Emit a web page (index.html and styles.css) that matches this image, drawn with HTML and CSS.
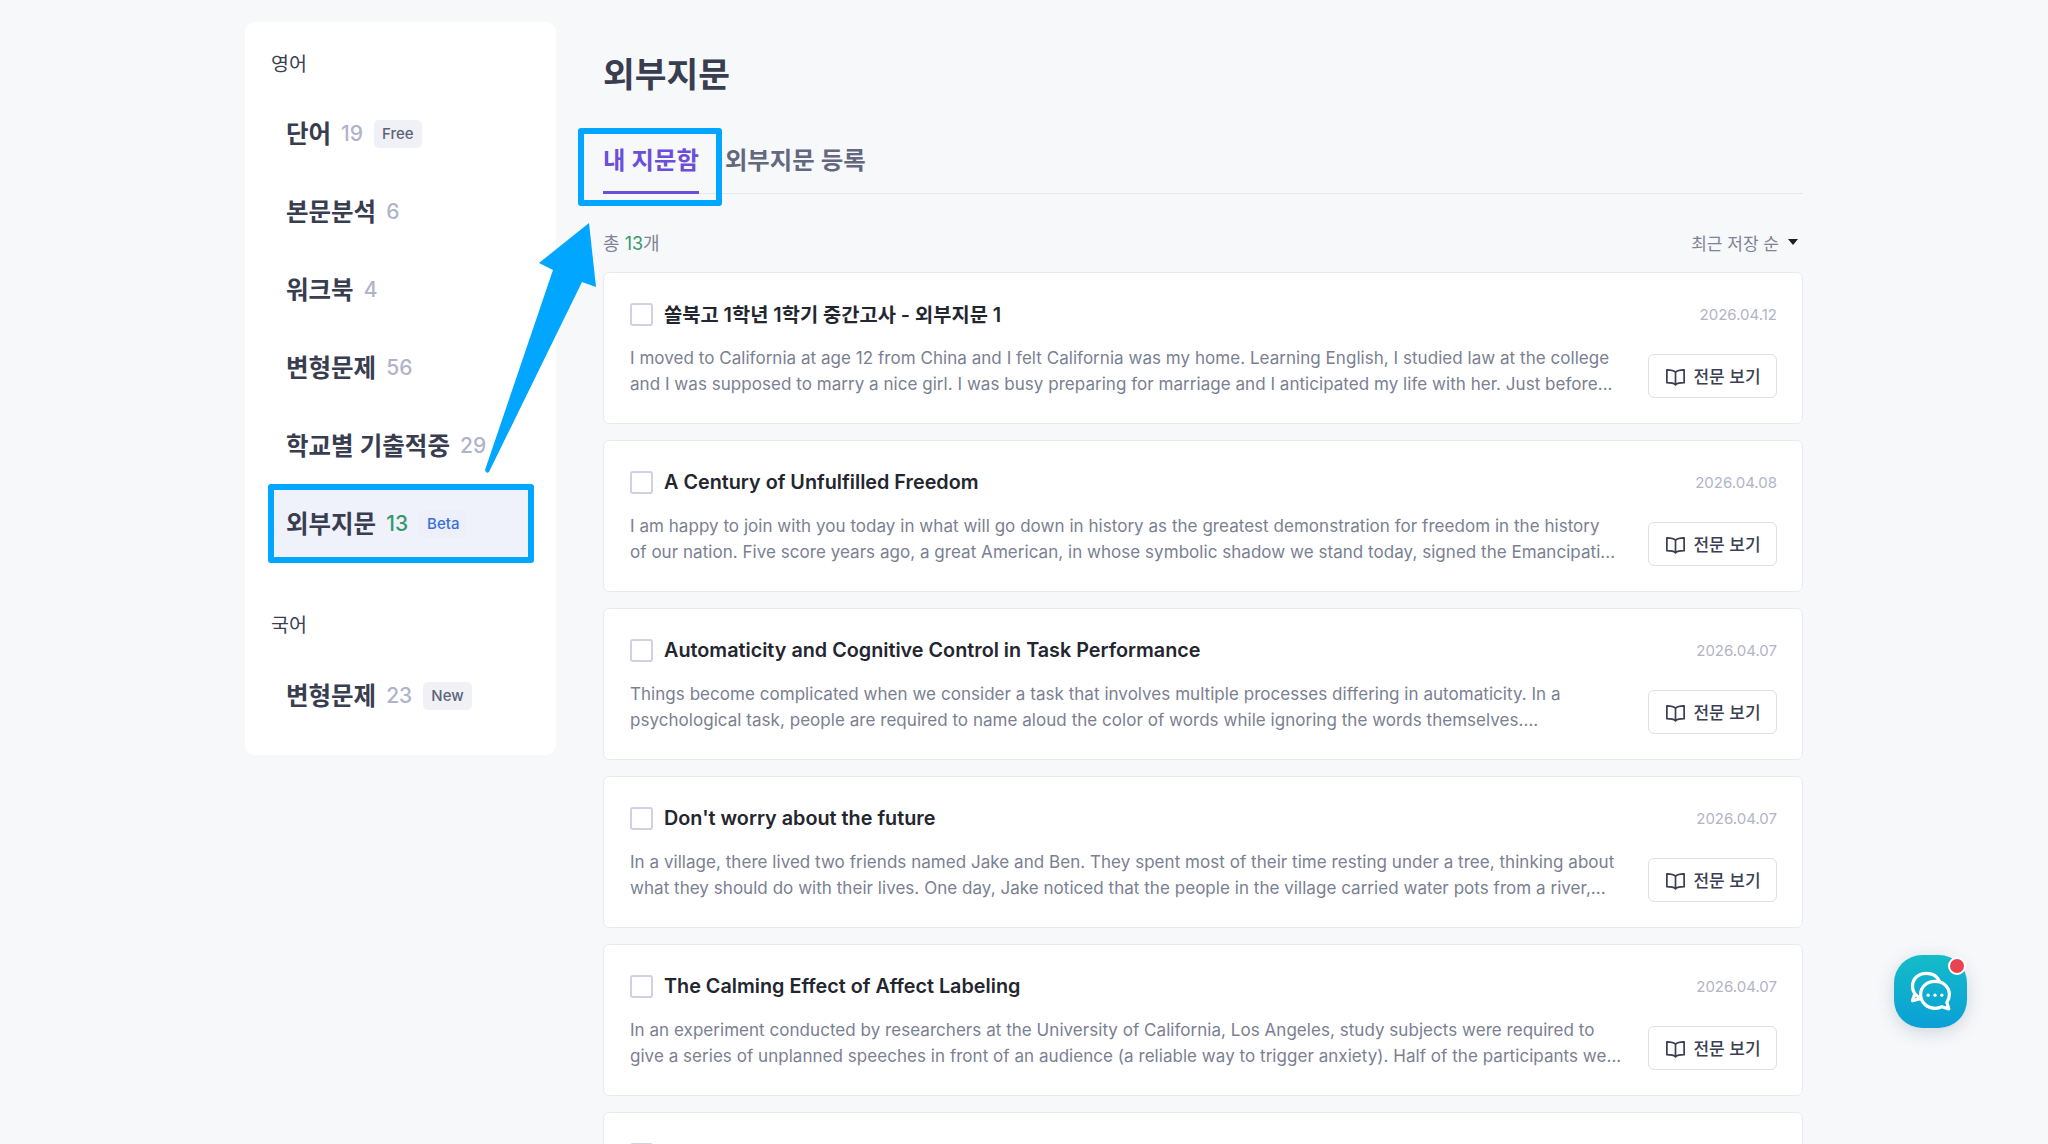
FILE: index.html
```html
<!DOCTYPE html>
<html lang="ko">
<head>
  <meta charset="UTF-8" />
  <title>외부지문</title>
  <link rel="stylesheet" href="styles.css">
</head>
<body>

  <div class="page">
    <!-- Sidebar -->
    <nav class="sidebar">
      <div class="group-label">영어</div>
      <a class="side-item"><span class="side-name">단어</span><span class="side-count">19</span><span class="tag">Free</span></a>
      <a class="side-item"><span class="side-name">본문분석</span><span class="side-count">6</span></a>
      <a class="side-item"><span class="side-name">워크북</span><span class="side-count">4</span></a>
      <a class="side-item"><span class="side-name">변형문제</span><span class="side-count">56</span></a>
      <a class="side-item"><span class="side-name">학교별 기출적중</span><span class="side-count">29</span></a>
      <a class="side-item active"><span class="side-name">외부지문</span><span class="side-count">13</span><span class="tag">Beta</span></a>
      <div class="group-label second">국어</div>
      <a class="side-item"><span class="side-name">변형문제</span><span class="side-count">23</span><span class="tag">New</span></a>
    </nav>

    <!-- Main -->
    <main class="content">
      <h1 class="page-title">외부지문</h1>

      <div class="tabs">
        <a class="tab active">내 지문함</a>
        <a class="tab">외부지문 등록</a>
      </div>

      <div class="list-head">
        <div class="total">총 <span class="total-num">13</span>개</div>
        <div class="sort">최근 저장 순 <span class="caret"></span></div>
      </div>

      <section class="cards">
        <article class="card">
          <div class="card-top">
            <span class="checkbox"></span>
            <h3>쏠북고 1학년 1학기 중간고사 - 외부지문 1</h3>
            <span class="date">2026.04.12</span>
          </div>
          <div class="card-body">
            <p>I moved to California at age 12 from China and I felt California was my home. Learning English, I studied law at the college<br>and I was supposed to marry a nice girl. I was busy preparing for marriage and I anticipated my life with her. Just before...</p>
            <button class="view-btn"><svg viewBox="0 0 24 24"><path d="M12 7.5C10.5 5.8 8 5 3 5v13.500c5 0 7.500.7 9 2.200 1.500-1.500 4-2.200 9-2.200V5c-5 0-7.500.8-9 2.500zM12 7.500v13.200"/></svg><span class="btn-label">전문 보기</span></button>
          </div>
        </article>

        <article class="card">
          <div class="card-top">
            <span class="checkbox"></span>
            <h3>A Century of Unfulfilled Freedom</h3>
            <span class="date">2026.04.08</span>
          </div>
          <div class="card-body">
            <p>I am happy to join with you today in what will go down in history as the greatest demonstration for freedom in the history<br>of our nation. Five score years ago, a great American, in whose symbolic shadow we stand today, signed the Emancipati...</p>
            <button class="view-btn"><svg viewBox="0 0 24 24"><path d="M12 7.5C10.5 5.8 8 5 3 5v13.500c5 0 7.500.7 9 2.200 1.500-1.500 4-2.200 9-2.200V5c-5 0-7.500.8-9 2.500zM12 7.500v13.200"/></svg><span class="btn-label">전문 보기</span></button>
          </div>
        </article>

        <article class="card">
          <div class="card-top">
            <span class="checkbox"></span>
            <h3>Automaticity and Cognitive Control in Task Performance</h3>
            <span class="date">2026.04.07</span>
          </div>
          <div class="card-body">
            <p>Things become complicated when we consider a task that involves multiple processes differing in automaticity. In a<br>psychological task, people are required to name aloud the color of words while ignoring the words themselves....</p>
            <button class="view-btn"><svg viewBox="0 0 24 24"><path d="M12 7.5C10.5 5.8 8 5 3 5v13.500c5 0 7.500.7 9 2.200 1.500-1.500 4-2.200 9-2.200V5c-5 0-7.500.8-9 2.500zM12 7.500v13.200"/></svg><span class="btn-label">전문 보기</span></button>
          </div>
        </article>

        <article class="card">
          <div class="card-top">
            <span class="checkbox"></span>
            <h3>Don't worry about the future</h3>
            <span class="date">2026.04.07</span>
          </div>
          <div class="card-body">
            <p>In a village, there lived two friends named Jake and Ben. They spent most of their time resting under a tree, thinking about<br>what they should do with their lives. One day, Jake noticed that the people in the village carried water pots from a river,...</p>
            <button class="view-btn"><svg viewBox="0 0 24 24"><path d="M12 7.5C10.5 5.8 8 5 3 5v13.500c5 0 7.500.7 9 2.200 1.500-1.500 4-2.200 9-2.200V5c-5 0-7.500.8-9 2.500zM12 7.500v13.200"/></svg><span class="btn-label">전문 보기</span></button>
          </div>
        </article>

        <article class="card">
          <div class="card-top">
            <span class="checkbox"></span>
            <h3>The Calming Effect of Affect Labeling</h3>
            <span class="date">2026.04.07</span>
          </div>
          <div class="card-body">
            <p>In an experiment conducted by researchers at the University of California, Los Angeles, study subjects were required to<br>give a series of unplanned speeches in front of an audience (a reliable way to trigger anxiety). Half of the participants we...</p>
            <button class="view-btn"><svg viewBox="0 0 24 24"><path d="M12 7.5C10.5 5.8 8 5 3 5v13.500c5 0 7.500.7 9 2.200 1.500-1.500 4-2.200 9-2.200V5c-5 0-7.500.8-9 2.500zM12 7.500v13.200"/></svg><span class="btn-label">전문 보기</span></button>
          </div>
        </article>

        <article class="card">
          <div class="card-top">
            <span class="checkbox"></span>
          </div>
        </article>
      </section>
    </main>
  </div>

  <!-- Annotation marks drawn over the page -->
  <div class="mark mark-tab"></div>
  <div class="mark mark-side"></div>
  <svg class="arrow" viewBox="0 0 2048 1144">
    <path d="M589 223 L596 287 L582 282 L489 472 Q486 474 485 470 L553 270 L539 263 Z" />
  </svg>

  <!-- Chat button -->
  <button class="chat-btn">
    <svg viewBox="0 0 48 48">
      <path d="M17 29.500C13.500 27.500 10 24.500 10 19.500 10 13 15 9 21 9c5 0 9 2.500 10.500 6.500" />
      <path d="M11.500 26.500 10 31l5.500-1.500" />
      <path d="M28 15.500c6.500 0 11.500 4.500 11.500 10.500 0 2.500-.8 4.500-2 6.300l1.500 5.200-5.500-1.700c-1.600.8-3.500 1.200-5.500 1.200-6.500 0-11.500-4.800-11.500-11 0-6 5-10.500 11.500-10.500z" />
      <circle class="dot" cx="22.500" cy="26.500" r="1.300" />
      <circle class="dot" cx="28" cy="26.500" r="1.300" />
      <circle class="dot" cx="33.500" cy="26.500" r="1.300" />
    </svg>
    <span class="chat-badge"></span>
  </button>

</body>
</html>
```

FILE: styles.css
```css
/* Reset & General */
html, body {
  margin: 0;
  padding: 0;
  height: 1144px;
  overflow: hidden;
  background: #f7f8fa;
  color: #3a3f52;
  font-family: Inter, "Noto Sans CJK KR", sans-serif;
}

.page {
  display: flex;
  align-items: flex-start;
  gap: 47px;
  padding: 22px 0 0 245px;
}

/* Sidebar */
.sidebar {
  width: 311px;
  box-sizing: border-box;
  padding: 29px 23px 21px;
  background: #fff;
  border-radius: 10px;
  display: flex;
  flex-direction: column;
}

.group-label {
  height: 26px;
  margin: 0 0 17px 3px;
  font-size: 19.5px;
  line-height: 26px;
  color: #3a3f52;
}
.group-label.second {
  margin-top: 50px;
  margin-bottom: 18px;
}

.side-item {
  height: 78px;
  display: flex;
  align-items: center;
  padding-left: 18px;
  border-radius: 4px;
}
.side-item.active {
  background: #eff1fb;
}
.side-name {
  margin-top: -1px;
  font-size: 24.5px;
  font-weight: 600;
  color: #383d50;
}
.side-count {
  margin-left: 10px;
  font-size: 21px;
  font-weight: 500;
  color: #afb3cb;
}
.side-item.active .side-count {
  color: #35996b;
}

.tag {
  margin: 2px 0 0 11px;
  padding: 0 8px;
  height: 28px;
  line-height: 28px;
  border-radius: 5px;
  background: #f0f1f6;
  color: #5d6278;
  font-size: 15px;
  font-weight: 500;
}
.side-item.active .tag {
  background: #edf0fa;
  color: #3a6fd8;
}

/* Main */
.content {
  width: 1200px;
}

.page-title {
  margin: 28px 0 0;
  font-size: 34.5px;
  line-height: 50px;
  font-weight: 700;
  color: #383d50;
}

.tabs {
  display: flex;
  gap: 26px;
  margin-top: 34px;
  height: 59px;
  border-bottom: 1px solid #e6e8ee;
}
.tab {
  height: 60px;
  box-sizing: border-box;
  font-size: 24.4px;
  line-height: 52px;
  font-weight: 600;
  color: #63687e;
}
.tab.active {
  color: #6c4fd8;
  border-bottom: 3px solid #6c4fd8;
}

.list-head {
  display: flex;
  justify-content: space-between;
  align-items: center;
  height: 26px;
  margin: 35px 0 17px;
  font-size: 18px;
  color: #7e8398;
}
.total-num {
  color: #35996b;
}
.sort {
  display: flex;
  align-items: center;
  gap: 9px;
  padding-right: 5px;
  font-size: 17px;
}
.caret {
  width: 0;
  height: 0;
  border-left: 5px solid transparent;
  border-right: 5px solid transparent;
  border-top: 6px solid #1c1e28;
}

/* Cards */
.cards {
  display: flex;
  flex-direction: column;
  gap: 16px;
}
.card {
  height: 152px;
  box-sizing: border-box;
  padding: 29px 25px 0 26px;
  background: #fff;
  border: 1px solid #e8eaef;
  border-radius: 6px;
}
.card-top {
  display: flex;
  align-items: center;
  height: 24px;
}
.card-top h3 {
  margin: 0 0 1px 1px;
  font-size: 19.8px;
  font-weight: 600;
  color: #23262f;
}
.checkbox {
  width: 23px;
  height: 23px;
  box-sizing: border-box;
  margin-right: 10px;
  border: 2px solid #cfd2e0;
  border-radius: 3px;
  background: #fff;
}
.date {
  margin-left: auto;
  font-size: 15px;
  color: #b1b4c8;
}
.card-body {
  display: flex;
  justify-content: space-between;
  align-items: flex-start;
  margin-top: 19px;
}
.card-body p {
  margin: 0;
  font-size: 17px;
  letter-spacing: 0.04px;
  line-height: 26px;
  color: #7a7f92;
  white-space: nowrap;
}
.view-btn {
  display: flex;
  align-items: center;
  justify-content: center;
  flex-shrink: 0;
  gap: 6px;
  width: 129px;
  height: 44px;
  margin-top: 9px;
  padding: 0;
  background: #fff;
  border: 1px solid #dcdee8;
  border-radius: 6px;
  font-family: inherit;
  font-size: 17px;
  font-weight: 500;
  white-space: nowrap;
  color: #3a3f52;
}
.btn-label {
  margin-top: -2px;
}
.view-btn svg {
  width: 23px;
  height: 23px;
  fill: none;
  stroke: #3a3f52;
  stroke-width: 1.8;
  stroke-linejoin: round;
}

/* Annotation marks */
.mark {
  position: absolute;
  box-sizing: border-box;
  border: 6px solid #00a6ff;
  border-radius: 3px;
}
.mark-tab {
  left: 578px;
  top: 128px;
  width: 144px;
  height: 78px;
}
.mark-side {
  left: 268px;
  top: 484px;
  width: 266px;
  height: 79px;
}
.arrow {
  position: absolute;
  left: 0;
  top: 0;
  width: 2048px;
  height: 1144px;
  fill: #00a6ff;
  pointer-events: none;
}

/* Chat button */
.chat-btn {
  position: fixed;
  left: 1894px;
  top: 955px;
  width: 73px;
  height: 73px;
  padding: 0;
  border: none;
  border-radius: 28px;
  background: linear-gradient(180deg, #14bcc8, #0b9fd6);
  box-shadow: 0 4px 18px rgba(30, 60, 90, 0.18);
}
.chat-btn svg {
  display: block;
  width: 60px;
  height: 60px;
  margin: 6px;
  fill: none;
  stroke: #fff;
  stroke-width: 2.600;
  stroke-linejoin: round;
  stroke-linecap: round;
}
.chat-btn .dot {
  fill: #fff;
  stroke: none;
}
.chat-badge {
  position: absolute;
  right: 1px;
  top: 2px;
  width: 14px;
  height: 14px;
  border: 2px solid #fff;
  border-radius: 50%;
  background: #e8434f;
}
```
